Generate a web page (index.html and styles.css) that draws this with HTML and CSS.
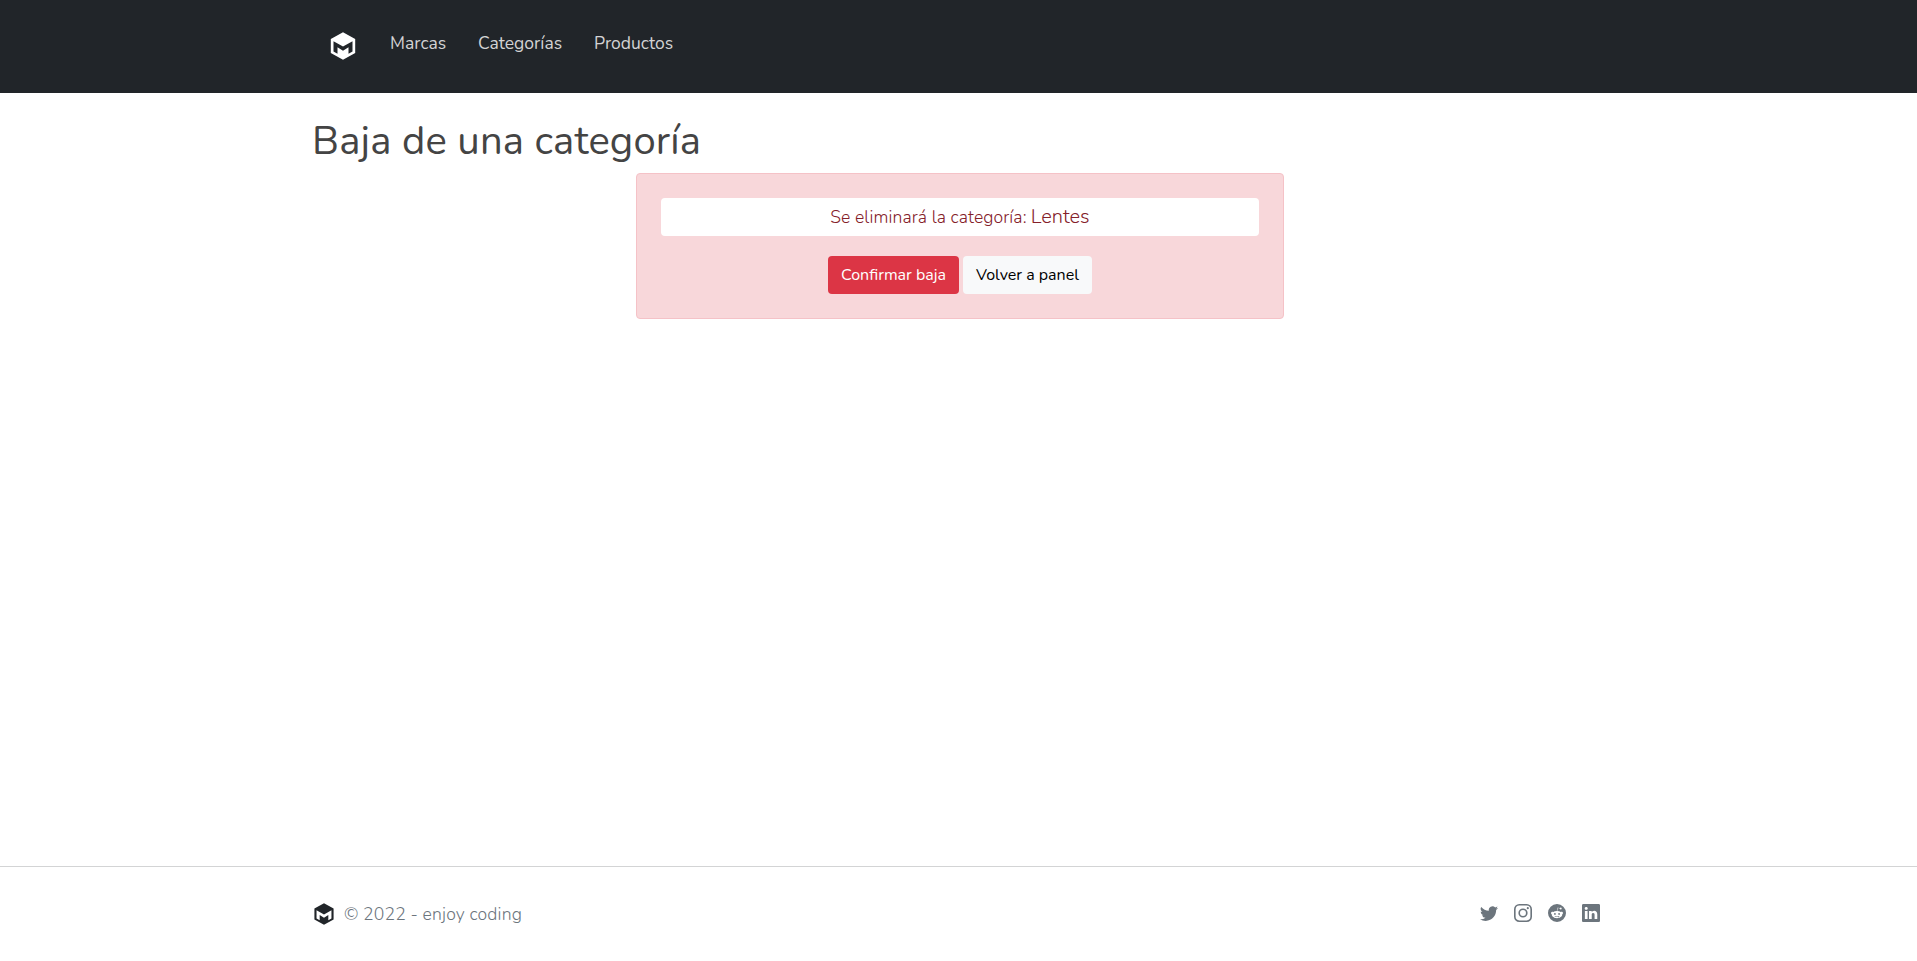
FILE: index.html
```
<!DOCTYPE html>
<html lang="es">
<head>
<meta charset="utf-8">
<title>Baja de una categoría</title>
<link rel="stylesheet" href="styles.css">
</head>
<body>
<svg class="defs" aria-hidden="true">
  <symbol id="logo" viewBox="0 0 26 28">
    <path fill="currentColor" fill-rule="evenodd" d="M13 .2 25.200 7.100v13.800L13 27.800.8 20.900V7.100ZM3.500 9.300v10.300l4 2.200V15.300l5.500 3.500 5.500-3.500v6.500l4-2.200V9.300L13 14.500Z"/>
  </symbol>
</svg>
<header class="navbar">
  <nav class="container nav">
    <a class="brand"><svg class="logo"><use href="#logo"/></svg></a>
    <a class="link marcas">Marcas</a>
    <a class="link categorias">Categorías</a>
    <a class="link productos">Productos</a>
  </nav>
</header>
<main class="container main">
  <h1 class="title">Baja de una categoría</h1>
  <section class="alert">
    <p class="message"><span class="lead">Se eliminará la categoría:</span> <span class="name">Lentes</span></p>
    <div class="actions">
      <button class="btn danger">Confirmar baja</button>
      <a class="btn light">Volver a panel</a>
    </div>
  </section>
</main>
<footer class="footer">
  <div class="container foot">
    <svg class="foot-logo"><use href="#logo"/></svg>
    <span class="copy">© 2022 - enjoy coding</span>
    <div class="social">
      <svg viewBox="0 0 16 16"><path d="M5.026 15c6.038 0 9.341-5.003 9.341-9.334 0-.14 0-.282-.006-.422A6.685 6.685 0 0 0 16 3.542a6.658 6.658 0 0 1-1.889.518 3.301 3.301 0 0 0 1.447-1.817 6.533 6.533 0 0 1-2.087.793A3.286 3.286 0 0 0 7.875 6.030a9.325 9.325 0 0 1-6.767-3.429 3.289 3.289 0 0 0 1.018 4.382A3.323 3.323 0 0 1 .640 6.575v.045a3.288 3.288 0 0 0 2.632 3.218 3.203 3.203 0 0 1-.865.115 3.230 3.230 0 0 1-.614-.057 3.283 3.283 0 0 0 3.067 2.277A6.588 6.588 0 0 1 .780 13.580a6.320 6.320 0 0 1-.780-.045A9.344 9.344 0 0 0 5.026 15z"/></svg>
      <svg viewBox="0 0 16 16"><path fill-rule="evenodd" d="M4.700 0h6.600A4.700 4.700 0 0 1 16 4.700v6.600a4.700 4.700 0 0 1-4.700 4.700H4.700A4.700 4.700 0 0 1 0 11.300V4.700A4.700 4.700 0 0 1 4.700 0Zm.1 1.440A3.360 3.360 0 0 0 1.440 4.800v6.400a3.360 3.360 0 0 0 3.360 3.360h6.400a3.360 3.360 0 0 0 3.360-3.360V4.800a3.360 3.360 0 0 0-3.360-3.360ZM8 3.890a4.110 4.110 0 1 1 0 8.220 4.110 4.110 0 0 1 0-8.220Zm0 1.440a2.670 2.670 0 1 0 0 5.340 2.670 2.670 0 0 0 0-5.340Zm4.270-2.560a.960.960 0 1 1 0 1.920.960.960 0 0 1 0-1.920Z"/></svg>
      <svg viewBox="0 0 16 16"><path d="M6.167 8a.831.831 0 0 0-.830.830c0 .459.372.840.830.831a.831.831 0 0 0 0-1.661zm1.843 3.647c.315 0 1.403-.038 1.976-.611a.232.232 0 0 0 0-.306.213.213 0 0 0-.306 0c-.353.363-1.126.487-1.670.487-.545 0-1.308-.124-1.671-.487a.213.213 0 0 0-.306 0 .213.213 0 0 0 0 .306c.564.563 1.652.610 1.977.610zm.992-2.807c0 .458.373.830.831.830.458 0 .830-.381.830-.830a.831.831 0 0 0-1.660 0z"/><path d="M16 8A8 8 0 1 1 0 8a8 8 0 0 1 16 0zm-3.828-1.165c-.315 0-.602.124-.812.325-.801-.573-1.900-.945-3.121-.993l.534-2.501 1.738.372a.830.830 0 1 0 .830-.869.830.830 0 0 0-.744.468l-1.938-.410a.203.203 0 0 0-.153.028.186.186 0 0 0-.086.134l-.592 2.788c-1.240.038-2.358.410-3.170.992-.210-.200-.496-.324-.810-.324a1.163 1.163 0 0 0-.478 2.224c-.020.115-.029.230-.029.353 0 1.795 2.091 3.256 4.669 3.256 2.577 0 4.668-1.451 4.668-3.256 0-.114-.010-.238-.029-.353.401-.181.688-.592.688-1.069 0-.650-.525-1.165-1.165-1.165z"/></svg>
      <svg viewBox="0 0 16 16"><path d="M0 1.146C0 .513.526 0 1.175 0h13.650C15.474 0 16 .513 16 1.146v13.708c0 .633-.526 1.146-1.175 1.146H1.175C.526 16 0 15.487 0 14.854V1.146zm4.943 12.248V6.169H2.542v7.225h2.401zm-1.200-8.212c.837 0 1.358-.554 1.358-1.248-.015-.709-.520-1.248-1.342-1.248-.822 0-1.359.540-1.359 1.248 0 .694.521 1.248 1.327 1.248h.016zm4.908 8.212V9.359c0-.216.016-.432.080-.586.173-.431.568-.878 1.232-.878.869 0 1.216.662 1.216 1.634v3.865h2.401V9.250c0-2.220-1.184-3.252-2.764-3.252-1.274 0-1.845.700-2.165 1.193v.025h-.016a5.540 5.540 0 0 1 .016-.025V6.169h-2.400c.030.678 0 7.225 0 7.225h2.400z"/></svg>
    </div>
  </div>
</footer>
</body>
</html>
```
FILE: styles.css
```
* { box-sizing: border-box; }
body {
  margin: 0;
  height: 961px;
  display: flex;
  flex-direction: column;
  background: #fff;
  color: #444;
  font-family: Nunito, Lato, sans-serif;
  font-size: 18px;
  white-space: nowrap;
}
.defs { display: none; }
.container { width: 1295px; margin: 0 auto; }
.navbar { height: 93px; background: #212529; color: #d3d3d4; }
.nav { display: flex; height: 86px; align-items: center; padding-left: 19px; }
.brand { width: 60px; height: 28px; padding-top: 2.500px; color: #fff; }
.logo { width: 26px; height: 28px; display: block; }
.link { font-size: 17.500px; line-height: 27px; }
.marcas { width: 88px; }
.categorias { width: 116px; }
.main { flex: 1; padding-top: 24px; }
.title { margin: 0 0 8px 1px; font-size: 40px; line-height: 48px; font-weight: 400; letter-spacing: 0.150px; }
.alert {
  width: 648px;
  height: 146px;
  margin: 0 0 0 325px;
  padding: 24px;
  background: #f8d7da;
  border: 1px solid #f5c2c7;
  border-radius: 4px;
  color: #842029;
}
.message {
  display: flex;
  justify-content: center;
  align-items: baseline;
  gap: 4px;
  margin: 0 0 20px;
  height: 38px;
  line-height: 38px;
  background: #fff;
  border-radius: 4px;
  font-weight: 300;
}
.lead { font-size: 17.600px; letter-spacing: 0.100px; }
.name { font-size: 20px; }
.actions { display: flex; justify-content: center; gap: 4px; }
.btn {
  height: 38px;
  border: 0;
  border-radius: 4px;
  padding: 0;
  font: 400 16px/38px Nunito, Lato, sans-serif;
  text-align: center;
}
.danger { width: 131px; background: #dc3545; color: #fff; }
.light { width: 129px; background: #f8f9fa; color: #000; }
.footer { height: 95px; border-top: 1px solid #d3d4d5; color: #6c757d; }
.foot { display: flex; align-items: center; height: 94px; padding: 0 6px 0 2px; }
.foot-logo { width: 22px; height: 22px; color: #212529; }
.copy { margin-left: 9px; font-size: 17.600px; font-weight: 300; letter-spacing: 0.150px; }
.social { display: flex; gap: 16px; margin: 0 0 2px auto; }
.social svg { width: 18px; height: 18px; fill: currentColor; }
```
